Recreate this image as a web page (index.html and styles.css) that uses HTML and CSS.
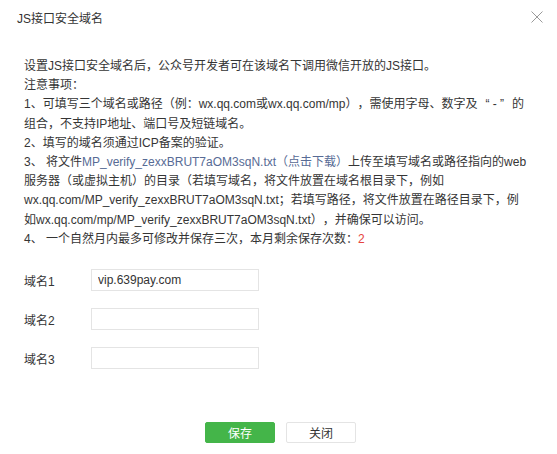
FILE: index.html
```html
<!DOCTYPE html>
<html lang="zh-CN">
<head>
<meta charset="utf-8">
<title>JS接口安全域名</title>
<link rel="stylesheet" href="styles.css">
</head>
<body>
<div class="dialog">
  <div class="dialog-hd">
    <h3 class="dialog-title">JS接口安全域名</h3>
    <button class="dialog-close" type="button" aria-label="关闭">
      <svg width="12" height="12" viewBox="0 0 12 12"><path d="M0.5 0.5L11.5 11.5M11.5 0.5L0.5 11.5" stroke="#9a9a9a" stroke-width="1" fill="none"/></svg>
    </button>
  </div>
  <div class="dialog-bd">
    <div class="desc">
      <p>设置JS接口安全域名后，公众号开发者可在该域名下调用微信开放的JS接口。</p>
      <p>注意事项：</p>
      <p>1、可填写三个域名或路径（例：wx.qq.com或wx.qq.com/mp），需使用字母、数字及<span class="q-open">“</span> - <span class="q-close">”</span>的<br>组合，不支持IP地址、端口号及短链域名。</p>
      <p>2、填写的域名须通过ICP备案的验证。</p>
      <p>3、 将文件<a class="link" href="#">MP_verify_zexxBRUT7aOM3sqN.txt（点击下载）</a>上传至填写域名或路径指向的web<br>服务器（或虚拟主机）的目录（若填写域名，将文件放置在域名根目录下，例如<br>wx.qq.com/MP_verify_zexxBRUT7aOM3sqN.txt；若填写路径，将文件放置在路径目录下，例<br>如wx.qq.com/mp/MP_verify_zexxBRUT7aOM3sqN.txt），并确保可以访问。</p>
      <p>4、 一个自然月内最多可修改并保存三次，本月剩余保存次数：<span class="count">2</span></p>
    </div>
    <div class="form">
      <div class="form-row">
        <label class="form-label">域名1</label>
        <input class="form-input" type="text" value="vip.639pay.com">
      </div>
      <div class="form-row">
        <label class="form-label">域名2</label>
        <input class="form-input" type="text" value="">
      </div>
      <div class="form-row">
        <label class="form-label">域名3</label>
        <input class="form-input" type="text" value="">
      </div>
    </div>
  </div>
  <div class="dialog-ft">
    <button class="btn btn-primary" type="button">保存</button>
    <button class="btn btn-default" type="button">关闭</button>
  </div>
</div>
</body>
</html>
```

FILE: styles.css
```css
* { box-sizing: border-box; }
html, body {
  margin: 0;
  padding: 0;
  background: #fff;
}
body {
  font-family: "Liberation Sans", "Noto Sans CJK SC", sans-serif;
  font-size: 12px;
  color: #353535;
  text-spacing-trim: space-all;
}
.dialog {
  width: 557px;
  height: 454px;
  display: flex;
  flex-direction: column;
}
.dialog-hd {
  height: 34px;
  display: flex;
  align-items: center;
  justify-content: space-between;
  padding: 0 14px 0 17px;
}
.dialog-title {
  margin: 0;
  font-size: 12px;
  font-weight: normal;
  color: #333;
}
.dialog-close {
  border: 0;
  background: none;
  padding: 0;
  width: 12px;
  height: 12px;
  display: block;
  cursor: pointer;
}
.dialog-close svg { display: block; }
.dialog-bd {
  padding: 23px 24px 0 24px;
}
.desc p {
  margin: 0;
  line-height: 19.2px;
  white-space: pre-line;
  white-space: nowrap;
}
.q-open,
.q-close {
  display: inline-block;
  width: 12px;
}
.q-open { text-align: right; }
.q-close { text-align: left; }
.link {
  color: #576b95;
  text-decoration: none;
}
.count {
  color: #e64340;
}
.form {
  margin-top: 20px;
  display: flex;
  flex-direction: column;
  gap: 17px;
}
.form-row {
  display: flex;
  align-items: center;
  height: 22px;
}
.form-label {
  width: 67px;
  color: #353535;
}
.form-input {
  width: 168px;
  height: 22px;
  border: 1px solid #e4e4e4;
  border-radius: 0;
  padding: 0 6px;
  font-family: "Liberation Sans", "Noto Sans CJK SC", sans-serif;
  font-size: 12px;
  color: #333;
  outline: none;
  background: #fff;
}
.dialog-ft {
  margin-top: auto;
  padding-bottom: 11px;
  display: flex;
  justify-content: center;
  gap: 11px;
  padding-left: 4px;
}
.btn {
  width: 70px;
  height: 21px;
  border-radius: 2px;
  font-family: "Liberation Sans", "Noto Sans CJK SC", sans-serif;
  font-size: 12px;
  padding: 0;
  cursor: pointer;
}
.btn-primary {
  background: #44b549;
  border: 1px solid #44b549;
  color: #fff;
}
.btn-default {
  background: #fff;
  border: 1px solid #e4e4e4;
  color: #333;
}
```
